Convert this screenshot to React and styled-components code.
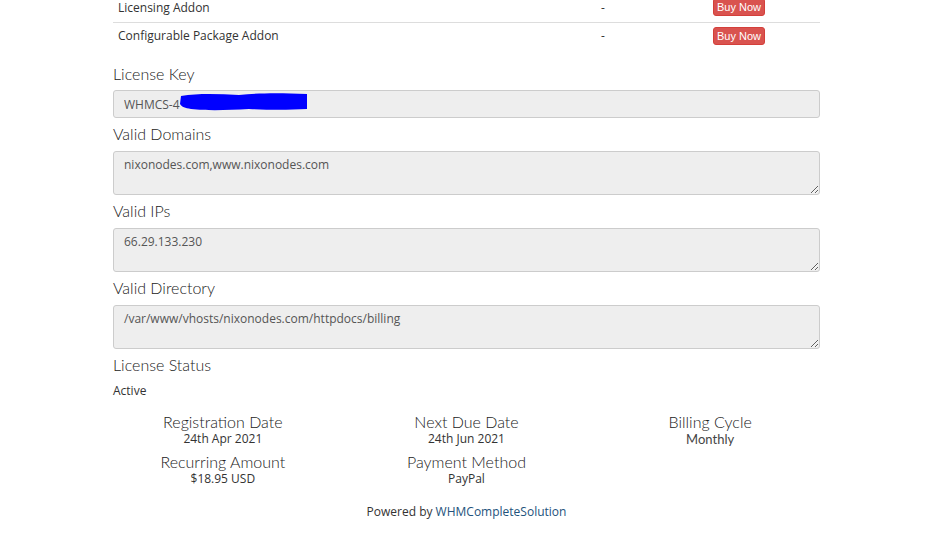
import React from "react";
import styled, { createGlobalStyle } from "styled-components";

const Global = createGlobalStyle`
  html, body { margin: 0; padding: 0; background: #fff; }
  body { font-family: "Open Sans", "Liberation Sans", sans-serif; color: #333; overflow: hidden; }
`;

const Page = styled.div`
  width: 707px;
  margin: -6px 0 0 113px;
`;

const Table = styled.div`
  display: flex;
  flex-direction: column;
`;

const Row = styled.div`
  box-sizing: border-box;
  display: grid;
  grid-template-columns: 483px 117px 1fr;
  align-items: center;
  height: 28px;
  padding-bottom: 2px;
  border-top: ${(p) => (p.$line ? "1px solid #ddd" : "none")};
  font-size: 12px;
  color: #333;
`;

const Name = styled.span`
  padding-left: 5px;
`;

const Dash = styled.span`
  padding-left: 5px;
`;

const BuyButton = styled.button`
  justify-self: start;
  height: 18px;
  padding: 0 3px;
  border: 1px solid #d43f3a;
  border-radius: 3px;
  background: #d9534f;
  color: #fff;
  font-family: "Liberation Sans", Arial, sans-serif;
  font-size: 11px;
  line-height: 16px;
`;

const Fields = styled.div`
  margin-top: 14px;
  display: flex;
  flex-direction: column;
`;

const Label = styled.div`
  font-family: Lato, "Open Sans", sans-serif;
  font-weight: 300;
  font-size: 16px;
  line-height: 20px;
  color: #222;
  margin-bottom: ${(p) => (p.$tall ? "7px" : "6px")};
`;

const Field = styled.div`
  margin-bottom: 6px;
  position: relative;
`;

const Input = styled.input`
  box-sizing: border-box;
  display: block;
  width: 100%;
  height: 28px;
  padding: 0 10px;
  border: 1px solid #ccc;
  border-radius: 3px;
  background: #eee;
  color: #555;
  font-family: "Open Sans", sans-serif;
  font-size: 12px;
  outline: none;
`;

const TextArea = styled.textarea`
  box-sizing: border-box;
  display: block;
  width: 100%;
  height: 44px;
  padding: 4px 10px;
  border: 1px solid #ccc;
  border-radius: 3px;
  background: #eee;
  color: #555;
  font-family: "Open Sans", sans-serif;
  font-size: 12px;
  line-height: 17px;
  outline: none;
  resize: vertical;
`;

const Scribble = styled.svg`
  position: absolute;
  left: 66px;
  top: 2px;
`;

const Status = styled.div`
  font-size: 12px;
  line-height: 17px;
  color: #333;
  margin-top: 1px;
`;

const InfoGrid = styled.div`
  margin: 14px -12px 0;
  display: grid;
  grid-template-columns: repeat(3, 1fr);
  row-gap: 6px;
`;

const Info = styled.div`
  text-align: center;
`;

const InfoTitle = styled.div`
  font-family: Lato, "Open Sans", sans-serif;
  font-weight: 300;
  font-size: 16px;
  line-height: 18px;
  color: #222;
`;

const InfoValue = styled.div`
  font-family: ${(p) => (p.$alt ? 'Lato, "Open Sans", sans-serif' : '"Open Sans", sans-serif')};
  font-size: ${(p) => (p.$alt ? "13px" : "12px")};
  line-height: 16px;
  color: ${(p) => (p.$alt ? "#444" : "#333")};
`;

const Footer = styled.div`
  margin-top: 16px;
  text-align: center;
  font-size: 12px;
  line-height: 17px;
  color: #333;
`;

const Link = styled.a`
  color: #23527c;
  text-decoration: none;
`;

const addons = ["Licensing Addon", "Configurable Package Addon"];

const info = [
  ["Registration Date", "24th Apr 2021"],
  ["Next Due Date", "24th Jun 2021"],
  ["Billing Cycle", "Monthly", true],
  ["Recurring Amount", "$18.95 USD"],
  ["Payment Method", "PayPal"],
];

const areas = [
  ["Valid Domains", "nixonodes.com,www.nixonodes.com"],
  ["Valid IPs", "66.29.133.230"],
  ["Valid Directory", "/var/www/vhosts/nixonodes.com/httpdocs/billing"],
];

export default function App() {
  return (
    <>
      <Global />
      <Page>
        <Table>
          {addons.map((a, i) => (
            <Row key={a} $line={i > 0}>
              <Name>{a}</Name>
              <Dash>-</Dash>
              <BuyButton>Buy Now</BuyButton>
            </Row>
          ))}
        </Table>
        <Fields>
          <Label>License Key</Label>
          <Field>
            <Input readOnly value="WHMCS-4" />
            <Scribble width="130" height="20" viewBox="0 0 130 20">
              <path
                d="M2 4 C20 1 40 2 60 3 C80 1 100 1 128 2 L128 17 C110 18 90 18 70 17 C50 18 30 19 12 17 C6 16 3 15 1 12 Z"
                fill="#0000ff"
              />
            </Scribble>
          </Field>
          {areas.map(([l, v]) => (
            <React.Fragment key={l}>
              <Label $tall>{l}</Label>
              <Field>
                <TextArea readOnly value={v} />
              </Field>
            </React.Fragment>
          ))}
          <Label>License Status</Label>
          <Status>Active</Status>
        </Fields>
        <InfoGrid>
          {info.map(([t, v, alt]) => (
            <Info key={t}>
              <InfoTitle>{t}</InfoTitle>
              <InfoValue $alt={alt}>{v}</InfoValue>
            </Info>
          ))}
        </InfoGrid>
        <Footer>
          Powered by <Link href="#">WHMCompleteSolution</Link>
        </Footer>
      </Page>
    </>
  );
}
